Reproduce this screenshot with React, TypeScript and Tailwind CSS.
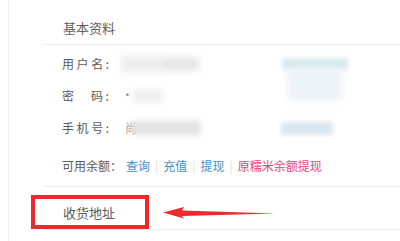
import React from "react";

export default function App() {
  const font = { fontFamily: '"Noto Sans CJK SC", "Noto Sans", sans-serif' };
  return (
    <div className="relative w-[400px] h-[241px] bg-white overflow-hidden" style={font}>
      <div className="flex h-full">
        <div className="w-[8px]" />
        <div className="flex-1 border-l border-[#efefef] pl-[35px]">
          <div className="h-[45px] border-b border-[#ececec] pl-[19px] pt-[19px] text-[13px] leading-[17px] text-[#5f5f5f]">
            基本资料
          </div>
          <div className="pl-[18px] pt-[3px] text-[12px] text-[#5a5a5a]">
            <div className="flex items-center h-[32px]">
              <span className="w-[58px] tracking-[2.6px]">用户名:</span>
              <div className="ml-[1px] h-[16px] w-[40px] bg-[#ececec] blur-[3px]" />
              <div className="h-[14px] w-[38px] bg-[#e6e6e6] blur-[3px]" />
              <div className="ml-[83px] h-[12px] w-[66px] bg-[#d9eaee] blur-[2px]" />
            </div>
            <div className="flex items-center h-[32px]">
              <span className="flex w-[58px]">
                <span>密</span>
                <span className="ml-[17px] tracking-[2.6px]">码:</span>
              </span>
              <span className="ml-[5px] text-[10px] text-[#777]">*</span>
              <div className="ml-[3px] h-[14px] w-[30px] bg-[#f0f0f0] blur-[3px]" />
              <div className="ml-[124px] -mt-[22px] h-[32px] w-[56px] bg-[#eef3f8] blur-[3px]" />
            </div>
            <div className="flex items-center h-[32px]">
              <span className="w-[58px] tracking-[2.6px]">手机号:</span>
              <span className="ml-[5px] text-[#999]">尚</span>
              <div className="-ml-[6px] h-[14px] w-[70px] bg-[#e2e2e2] blur-[3px]" />
              <div className="ml-[80px] h-[13px] w-[52px] bg-[#dbe7f0] blur-[2px]" />
            </div>
            <div className="flex items-center h-[32px] mt-[6px]">
              <span className="w-[64px]">可用余额：</span>
              <span className="text-[#3d8fcf]">查询</span>
              <span className="mx-[5px] text-[#ddd]">|</span>
              <span className="text-[#3d8fcf]">充值</span>
              <span className="mx-[5px] text-[#ddd]">|</span>
              <span className="text-[#3d8fcf]">提现</span>
              <span className="mx-[5px] text-[#ddd]">|</span>
              <span className="text-[#e8467c]">原糯米余额提现</span>
            </div>
          </div>
          <div className="mt-[4px] border-t border-[#ececec] h-[44px] border-b pl-[19px] pt-[18px] text-[13px] leading-[16px] text-[#5a5a5a]">
            收货地址
          </div>
        </div>
      </div>
      <div className="absolute left-[31px] top-[195px] w-[118px] h-[34px] border-[4px] border-[#f0272d]" />
      <svg className="absolute left-[160px] top-[204px]" width="120" height="18" viewBox="0 0 120 18">
        <path d="M3 8.5 L24 3 L22 6.5 L115 9.5 L22 12 L24 14.5 Z" fill="#ee2a2e" />
      </svg>
    </div>
  );
}
